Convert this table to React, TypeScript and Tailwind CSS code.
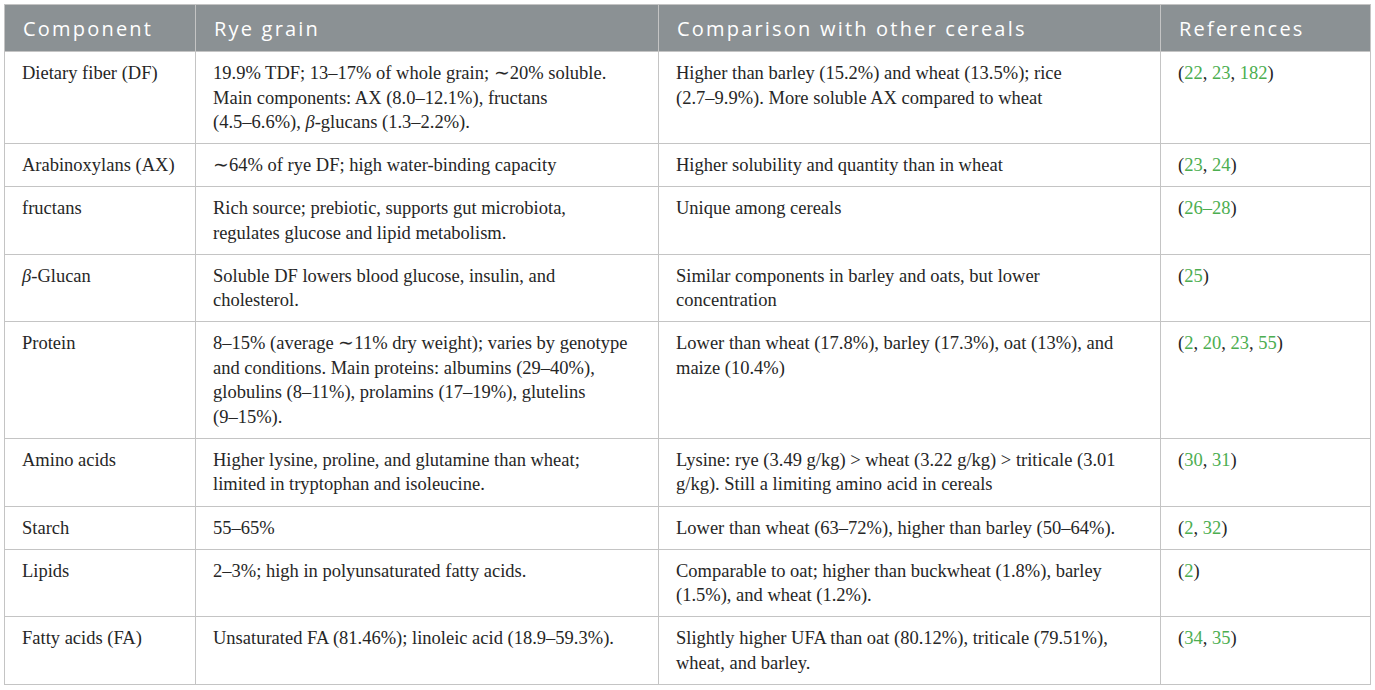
import type { ReactNode } from "react";

interface Row {
  component: ReactNode;
  rye: ReactNode;
  comparison: ReactNode;
  refs: string[];
}

const Beta = () => <i>β</i>;

const rows: Row[] = [
  {
    component: "Dietary fiber (DF)",
    rye: (
      <>
        19.9% TDF; 13–17% of whole grain; ∼20% soluble.
        <br />
        Main components: AX (8.0–12.1%), fructans
        <br />
        (4.5–6.6%), <Beta />-glucans (1.3–2.2%).
      </>
    ),
    comparison: (
      <>
        Higher than barley (15.2%) and wheat (13.5%); rice
        <br />
        (2.7–9.9%). More soluble AX compared to wheat
      </>
    ),
    refs: ["22", "23", "182"],
  },
  {
    component: "Arabinoxylans (AX)",
    rye: "∼64% of rye DF; high water-binding capacity",
    comparison: "Higher solubility and quantity than in wheat",
    refs: ["23", "24"],
  },
  {
    component: "fructans",
    rye: (
      <>
        Rich source; prebiotic, supports gut microbiota,
        <br />
        regulates glucose and lipid metabolism.
      </>
    ),
    comparison: "Unique among cereals",
    refs: ["26–28"],
  },
  {
    component: (
      <>
        <Beta />
        -Glucan
      </>
    ),
    rye: (
      <>
        Soluble DF lowers blood glucose, insulin, and
        <br />
        cholesterol.
      </>
    ),
    comparison: (
      <>
        Similar components in barley and oats, but lower
        <br />
        concentration
      </>
    ),
    refs: ["25"],
  },
  {
    component: "Protein",
    rye: (
      <>
        8–15% (average ∼11% dry weight); varies by genotype
        <br />
        and conditions. Main proteins: albumins (29–40%),
        <br />
        globulins (8–11%), prolamins (17–19%), glutelins
        <br />
        (9–15%).
      </>
    ),
    comparison: (
      <>
        Lower than wheat (17.8%), barley (17.3%), oat (13%), and
        <br />
        maize (10.4%)
      </>
    ),
    refs: ["2", "20", "23", "55"],
  },
  {
    component: "Amino acids",
    rye: (
      <>
        Higher lysine, proline, and glutamine than wheat;
        <br />
        limited in tryptophan and isoleucine.
      </>
    ),
    comparison: (
      <>
        Lysine: rye (3.49 g/kg) &gt; wheat (3.22 g/kg) &gt; triticale (3.01
        <br />
        g/kg). Still a limiting amino acid in cereals
      </>
    ),
    refs: ["30", "31"],
  },
  {
    component: "Starch",
    rye: "55–65%",
    comparison: "Lower than wheat (63–72%), higher than barley (50–64%).",
    refs: ["2", "32"],
  },
  {
    component: "Lipids",
    rye: "2–3%; high in polyunsaturated fatty acids.",
    comparison: (
      <>
        Comparable to oat; higher than buckwheat (1.8%), barley
        <br />
        (1.5%), and wheat (1.2%).
      </>
    ),
    refs: ["2"],
  },
  {
    component: "Fatty acids (FA)",
    rye: "Unsaturated FA (81.46%); linoleic acid (18.9–59.3%).",
    comparison: (
      <>
        Slightly higher UFA than oat (80.12%), triticale (79.51%),
        <br />
        wheat, and barley.
      </>
    ),
    refs: ["34", "35"],
  },
];

const headers = ["Component", "Rye grain", "Comparison with other cereals", "References"];

function Refs({ refs }: { refs: string[] }) {
  return (
    <>
      (
      {refs.map((r, i) => (
        <span key={r}>
          <span className="text-[#4cae50]">{r}</span>
          {i < refs.length - 1 && ", "}
        </span>
      ))}
      )
    </>
  );
}

export default function App() {
  const cell =
    "border border-[#c4c4c4] px-[17px] pt-[9px] pb-[8.6px] align-top whitespace-nowrap";

  return (
    <div className="min-h-screen bg-white p-[4px]">
      <table className="w-[1366px] table-fixed border-collapse font-['Liberation_Serif',serif] text-[18.5px] leading-[24.5px] text-[#262626]">
        <colgroup>
          <col className="w-[191px]" />
          <col className="w-[463px]" />
          <col className="w-[502px]" />
          <col className="w-[210px]" />
        </colgroup>
        <thead>
          <tr className="bg-[#8b9194]">
            {headers.map((h) => (
              <th
                key={h}
                className="border border-[#c4c4c4] px-[18px] pt-[11px] pb-[9px] text-left font-['Open_Sans',sans-serif] text-[20px] font-normal leading-[26px] tracking-[2.2px] text-white"
              >
                {h}
              </th>
            ))}
          </tr>
        </thead>
        <tbody>
          {rows.map((row, i) => (
            <tr key={i}>
              <td className={cell}>{row.component}</td>
              <td className={cell}>{row.rye}</td>
              <td className={cell}>{row.comparison}</td>
              <td className={cell}>
                <Refs refs={row.refs} />
              </td>
            </tr>
          ))}
        </tbody>
      </table>
    </div>
  );
}
